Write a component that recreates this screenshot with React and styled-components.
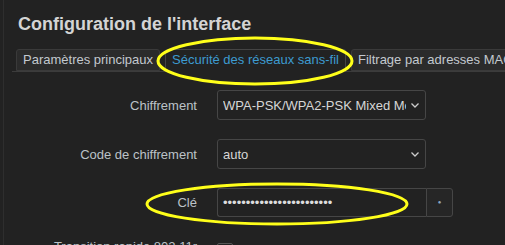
import React from 'react';
import styled, { createGlobalStyle } from 'styled-components';

const GlobalStyle = createGlobalStyle`
    html, body {
        margin: 0;
        padding: 0;
        background: #222;
        overflow: hidden;
    }
    body {
        font-family: "Liberation Sans", Arial, sans-serif;
    }
`;

const Page = styled.div`
    position: relative;
    width: 505px;
    height: 245px;
    box-sizing: border-box;
    margin-left: 3px;
    border-left: 1px solid #2e2e2e;
    overflow: hidden;
`;
const Title = styled.h2`
    margin: 0;
    padding: 14px 0 0 14px;
    height: 35px;
    box-sizing: border-box;
    font-size: 18px;
    font-weight: bold;
    color: #d4d4d4;
    line-height: 20px;
`;
const TabBar = styled.ul`
    display: flex;
    gap: 5px;
    list-style: none;
    margin: 14px 0 0 8px;
    padding: 0 0 0 4px;
    border-bottom: 1px solid #3c3c3c;
    height: 22px;
    white-space: nowrap;
`;
const Tab = styled.li`
    box-sizing: border-box;
    height: ${(p) => (p.$active ? '23px' : '22px')};
    padding: 0 6px;
    border: 1px solid ${(p) => (p.$active ? '#444' : '#3a3a3a')};
    border-bottom: ${(p) => (p.$active ? 'none' : '1px solid #3a3a3a')};
    border-radius: 3px 3px 0 0;
    background: ${(p) => (p.$active ? '#222' : '#2b2b2b')};
    color: ${(p) => (p.$active ? '#3d9bd0' : '#c3c9cf')};
    font-size: 13px;
    line-height: 20px;
    flex-shrink: 0;
`;
const Form = styled.div`
    display: grid;
    grid-template-columns: 193px 236px;
    column-gap: 20px;
    row-gap: 19px;
    padding: 18px 0 0 0;
    align-items: center;
`;
const Label = styled.label`
    text-align: right;
    font-size: 13px;
    line-height: 15px;
    color: #bcc2c8;
    white-space: nowrap;
`;
const LastLabel = styled(Label)`
    align-self: start;
    margin-top: 3px;
`;
const Select = styled.div`
    display: flex;
    align-items: center;
    box-sizing: border-box;
    width: 209px;
    height: 30px;
    padding: 0 5px 0 5px;
    border: 1px solid #464646;
    border-radius: 3px;
    background: #222;
    color: #d6d6d6;
    font-size: 13px;
`;
const SelectText = styled.span`
    flex: 1;
    overflow: hidden;
    white-space: nowrap;
`;
const Chevron = styled.svg`
    flex-shrink: 0;
    margin-left: 4px;
`;
const KeyGroup = styled.div`
    display: flex;
    height: 29px;
`;
const KeyInput = styled.input`
    box-sizing: border-box;
    width: 209px;
    height: 29px;
    padding: 0 5px;
    border: 1px solid #464646;
    border-right: none;
    border-radius: 3px 0 0 3px;
    background: #222;
    color: #ddd;
    font-family: "Liberation Sans", Arial, sans-serif;
    font-size: 13px;
    outline: none;
`;
const RevealButton = styled.button`
    box-sizing: border-box;
    width: 27px;
    height: 29px;
    padding: 0;
    border: 1px solid #464646;
    border-radius: 0 3px 3px 0;
    background: #262626;
    color: #8fa7c0;
    font-size: 6px;
    line-height: 27px;
`;
const Checkbox = styled.span`
    display: block;
    align-self: start;
    width: 14px;
    height: 14px;
    margin-top: 7px;
    border: 1px solid #555;
    border-radius: 2px;
`;
const Marks = styled.svg`
    position: absolute;
    left: -4px;
    top: 0;
    pointer-events: none;
`;

const ChevronIcon = () => (
    <Chevron width="10" height="10" viewBox="0 0 10 10">
        <path d="M1.5 3.5 L5 7 L8.5 3.5" fill="none" stroke="#ccc" strokeWidth="1.3" />
    </Chevron>
);

export default function App() {
    return (
        <>
            <GlobalStyle />
            <Page>
                <Title>Configuration de l'interface</Title>
                <TabBar>
                    <Tab>Paramètres principaux</Tab>
                    <Tab $active>Sécurité des réseaux sans-fil</Tab>
                    <Tab>Filtrage par adresses MAC</Tab>
                </TabBar>
                <Form>
                    <Label>Chiffrement</Label>
                    <Select>
                        <SelectText>WPA-PSK/WPA2-PSK Mixed Mode</SelectText>
                        <ChevronIcon />
                    </Select>
                    <Label>Code de chiffrement</Label>
                    <Select>
                        <SelectText>auto</SelectText>
                        <ChevronIcon />
                    </Select>
                    <Label>Clé</Label>
                    <KeyGroup>
                        <KeyInput type="password" readOnly defaultValue="abcdefghijklmnopqrstuvwx" />
                        <RevealButton>●</RevealButton>
                    </KeyGroup>
                    <LastLabel>Transition rapide 802.11r</LastLabel>
                    <Checkbox />
                </Form>
                <Marks width="505" height="245" viewBox="0 0 505 245">
                    <ellipse cx="255" cy="61" rx="97" ry="23" fill="none" stroke="#ffff1a" strokeWidth="3" />
                    <ellipse cx="277" cy="204" rx="130" ry="20" fill="none" stroke="#ffff1a" strokeWidth="3" />
                </Marks>
            </Page>
        </>
    );
}
